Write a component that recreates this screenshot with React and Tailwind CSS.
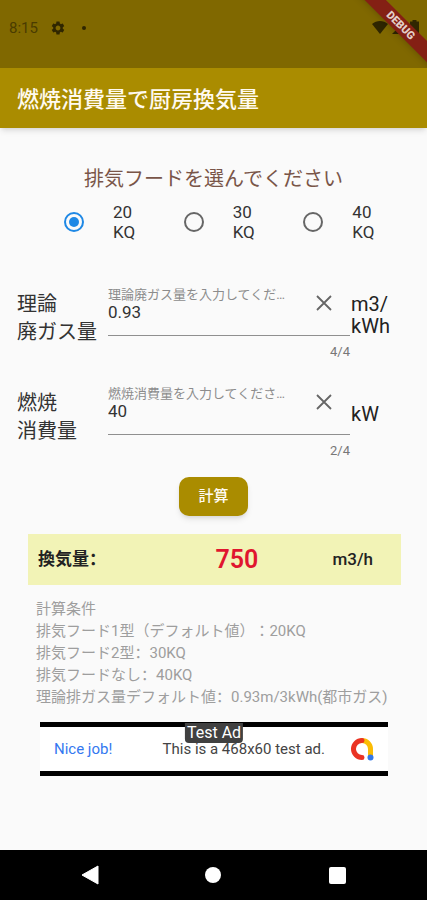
import { useState } from "react";
import { MdSettings } from "react-icons/md";

const hoods = ["20", "30", "40"];

function StatusBar() {
  return (
    <div className="relative flex h-[68px] items-start justify-between overflow-hidden bg-[#806800] pt-5 pl-[9px] pr-2 text-[#2f2600]">
      <div className="flex items-center">
        <span className="text-[15px] leading-4 text-[#4a3c00]">8:15</span>
        <MdSettings className="ml-3 size-4" />
        <span className="ml-4 size-1 rounded-full bg-current" />
      </div>
      <div className="flex items-start gap-1">
        <svg width="16" height="14" viewBox="0 0 16 14" fill="currentColor">
          <path d="M8 14 0 4C4.500 0 11.500 0 16 4Z" />
        </svg>
        <svg width="14" height="14" viewBox="0 0 14 14" fill="currentColor">
          <path d="M14 0v14H0Z" />
        </svg>
        <svg width="9" height="14" viewBox="0 0 9 14" fill="currentColor">
          <path d="M2.500 1.500V0h4v1.500H9V14H0V1.500Z" />
        </svg>
      </div>
      {/* Debug ribbon */}
      <div className="absolute top-0 -right-9 flex h-[50px] w-[124px] rotate-45 items-center">
        <span className="w-full bg-[#842014] text-center text-[11px] leading-[15px] font-black text-[#e3cfca] shadow-md">
          DEBUG
        </span>
      </div>
    </div>
  );
}

function Field({ id, label, caption, unit, max, value, onChange }) {
  return (
    <div className="flex items-center pl-[17px]">
      <label
        htmlFor={id}
        className="w-[91px] shrink-0 pb-3 text-[20px] leading-7 whitespace-pre-line text-[#333]"
      >
        {label}
      </label>
      <div className="min-w-0 flex-1">
        <div className="flex items-start border-b border-[#8f8f8f]">
          <div className="min-w-0 flex-1">
            <p className="mr-3 truncate text-[13px] leading-4 text-[#8c8c8c]">{caption}</p>
            <input
              id={id}
              className="block h-8 w-full bg-transparent pb-[14px] text-[17px] leading-5 text-[#333] outline-none"
              value={value}
              maxLength={max}
              onChange={(e) => onChange(e.target.value)}
            />
          </div>
          <button
            type="button"
            aria-label="クリア"
            className="flex h-8 w-[52px] items-center justify-center text-[#666]"
            onClick={() => onChange("")}
          >
            <svg width="16" height="16" viewBox="0 0 16 16" stroke="currentColor" strokeWidth="1.800">
              <path d="M1 1l14 14M15 1L1 15" />
            </svg>
          </button>
        </div>
        <p className="pt-2 text-right text-[13px] leading-4 text-[#777]">
          {value.length}/{max}
        </p>
      </div>
      <span className="w-[77px] shrink-0 pb-[18px] pl-px text-[20px] leading-[22px] whitespace-pre-line text-[#222]">
        {unit}
      </span>
    </div>
  );
}

// Fullwidth colon set to the left of its cell
function Colon() {
  return (
    <span lang="zh-CN" className="font-['Noto_Sans_CJK_SC',sans-serif] leading-none">
      ：
    </span>
  );
}

function AdBanner() {
  return (
    <div className="relative mr-[39px] ml-10 mt-[14px] flex h-[54px] items-center justify-between border-y-[5px] border-black bg-white pr-[14px] pl-[14px] text-[15px]">
      <a href="#ad" className="text-[#3478f0]">
        Nice job!
      </a>
      <div className="flex items-center gap-[25px]">
        <span className="text-[#444]">This is a 468x60 test ad.</span>
        <svg width="24" height="24" viewBox="0 0 24 24" fill="none" strokeWidth="5" strokeLinecap="round">
          <path d="M12 3.500a8.500 8.500 0 0 1 8.500 8.500v7" stroke="#fbbc04" />
          <path d="M12 3.500a8.500 8.500 0 1 0 0 17" stroke="#ea3323" />
          <circle cx="20.500" cy="20.500" r="3" fill="#3478e8" />
        </svg>
      </div>
      <span className="absolute -top-1 left-1/2 -translate-x-1/2 rounded-b-sm bg-[#404040] px-[2px] text-[16px] leading-5 whitespace-nowrap text-white">
        Test Ad
      </span>
    </div>
  );
}

export default function App() {
  const [hood, setHood] = useState("20");
  const [gas, setGas] = useState("0.93");
  const [burn, setBurn] = useState("40");
  const [result, setResult] = useState(750);

  const calculate = () => {
    setResult(Math.ceil(Number(hood) * Number(gas) * Number(burn)));
  };

  return (
    <div
      lang="ja"
      className="flex min-h-screen flex-col bg-[#fafafa] font-['Roboto','Noto_Sans_CJK_JP',sans-serif] [text-spacing-trim:space-all]"
    >
      <StatusBar />
      <header className="flex h-[60px] items-center bg-[#aa8c00] px-[17px] pt-1 shadow-md">
        <h1 className="text-[22px] leading-8 font-medium text-[#fffaf0]">燃焼消費量で厨房換気量</h1>
      </header>

      <main className="flex-1 pb-6">
        <fieldset>
          <legend className="w-full pt-[37px] text-center text-[20px] leading-7 text-[#795548]">
            排気フードを選んでください
          </legend>
          <div className="mt-[9px] grid grid-cols-3 pr-1 pl-16">
            {hoods.map((h) => (
              <label key={h} className="flex items-center gap-[29px] text-[17px] leading-5 text-[#333]">
                <input
                  type="radio"
                  name="hood"
                  value={h}
                  checked={hood === h}
                  onChange={() => setHood(h)}
                  className="size-5 shrink-0 appearance-none rounded-full border-2 border-[#666] bg-clip-content p-[3px] checked:border-[#1e88e5] checked:bg-[#1e88e5]"
                />
                <span className="w-6">{h} KQ</span>
              </label>
            ))}
          </div>
        </fieldset>

        <div className="mt-[45px] flex flex-col gap-[26px]">
          <Field
            id="gas"
            label={"理論\n廃ガス量"}
            caption="理論廃ガス量を入力してください"
            unit={"m3/\nkWh"}
            max={4}
            value={gas}
            onChange={setGas}
          />
          <Field
            id="burn"
            label={"燃焼\n消費量"}
            caption="燃焼消費量を入力してください"
            unit="kW"
            max={4}
            value={burn}
            onChange={setBurn}
          />
        </div>

        <button
          type="button"
          onClick={calculate}
          className="mx-auto mt-[18px] block h-[39px] rounded-[10px] bg-[#aa8c00] px-[19px] text-[15px] font-medium text-[#fffaf0] shadow-md"
        >
          計算
        </button>

        <div className="mr-[26px] ml-7 mt-[18px] grid h-[51px] grid-cols-[8fr_3fr_5fr] items-center bg-[#f2f3b6] pr-7 pl-[10px] text-[17px] font-bold text-[#222]">
          <span>
            換気量
            <Colon />
          </span>
          <output className="text-center text-[25px] font-semibold text-[#e0162f]">{result}</output>
          <span className="text-right font-medium">m3/h</span>
        </div>

        <div className="mt-[13px] pl-9 text-[15px] leading-[22px] whitespace-nowrap text-[#9e9e9e]">
          <p>計算条件</p>
          <p>排気フード1型（デフォルト値）：20KQ</p>
          <p>
            排気フード2型
            <Colon />
            30KQ
          </p>
          <p>
            排気フードなし
            <Colon />
            40KQ
          </p>
          <p>
            理論排ガス量デフォルト値
            <Colon />
            0.93m/3kWh(都市ガス)
          </p>
        </div>

        <AdBanner />
      </main>

      <nav className="grid h-[50px] grid-cols-3 place-items-center bg-black px-7 text-white">
        <button type="button" aria-label="戻る">
          <svg width="18" height="20" viewBox="0 0 18 20" fill="currentColor">
            <path d="M17 1v18L1 10Z" stroke="currentColor" strokeLinejoin="round" />
          </svg>
        </button>
        <button type="button" aria-label="ホーム" className="size-4 rounded-full bg-white" />
        <button type="button" aria-label="履歴" className="size-[17px] rounded-xs bg-white" />
      </nav>
    </div>
  );
}
